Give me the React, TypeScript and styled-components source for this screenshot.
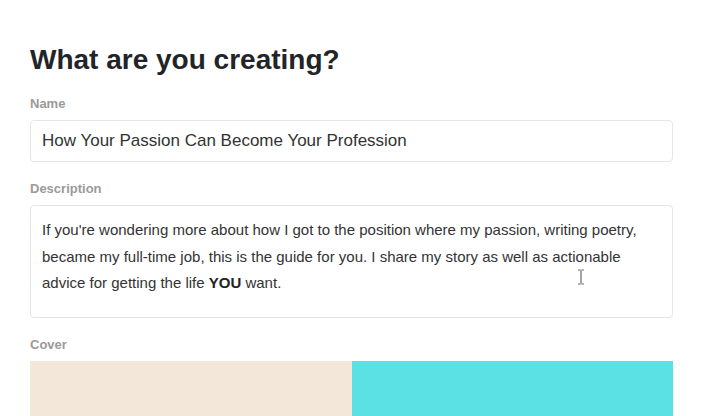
import React from 'react';
import styled, { createGlobalStyle } from 'styled-components';

const GlobalStyle = createGlobalStyle`
	html, body {
		margin: 0;
		padding: 0;
		background: #fff;
		font-family: "Liberation Sans", Arial, sans-serif;
	}
`;

const Page = styled.div`
	position: relative;
	width: 708px;
	height: 416px;
	overflow: hidden;
	background: #fff;
	padding: 40px 35px 0 30px;
	box-sizing: border-box;
`;

const Title = styled.h1`
	margin: 0;
	font-size: 28px;
	line-height: 40px;
	font-weight: 700;
	color: #222428;
`;

const Label = styled.div<{ gap: number }>`
	margin-top: ${p => p.gap}px;
	font-size: 13px;
	line-height: 16px;
	font-weight: 700;
	color: #9a9a9a;
`;

const Field = styled.div<{ height: number }>`
	margin-top: 8px;
	height: ${p => p.height}px;
	box-sizing: border-box;
	border: 1px solid #e6e6e6;
	border-radius: 4px;
	background: #fff;
	color: #333;
`;

const NameField = styled(Field)`
	display: flex;
	align-items: center;
	padding: 0 11px;
	font-size: 17px;
`;

const TextArea = styled(Field)`
	padding: 11px 11px;
	font-size: 15px;
	line-height: 26.5px;
	b {
		color: #222;
	}
`;

const Cover = styled.div`
	margin-top: 8px;
	height: 60px;
	display: grid;
	grid-template-columns: 1fr 1fr;
`;

const Swatch = styled.div<{ color: string }>`
	background: ${p => p.color};
`;

const Cursor = styled.svg`
	position: absolute;
	left: 577px;
	top: 269px;
`;

const App = () => {
	return (
		<Page>
			<GlobalStyle />
			<Title>What are you creating?</Title>
			<Label gap={16}>Name</Label>
			<NameField height={42}>How Your Passion Can Become Your Profession</NameField>
			<Label gap={19}>Description</Label>
			<TextArea height={113}>
				If you're wondering more about how I got to the position where my passion, writing poetry,
				became my full-time job, this is the guide for you. I share my story as well as actionable
				advice for getting the life <b>YOU</b> want.
			</TextArea>
			<Label gap={19}>Cover</Label>
			<Cover>
				<Swatch color="#f3e7d9" />
				<Swatch color="#5be1e4" />
			</Cover>
			<Cursor width="8" height="16" viewBox="0 0 8 16">
				<path d="M1 1h2.5M4.5 1H7M4 1.5v13M1 15h2.5M4.5 15H7" stroke="#666" strokeWidth="1.2" fill="none" />
			</Cursor>
		</Page>
	);
};

export default App;
